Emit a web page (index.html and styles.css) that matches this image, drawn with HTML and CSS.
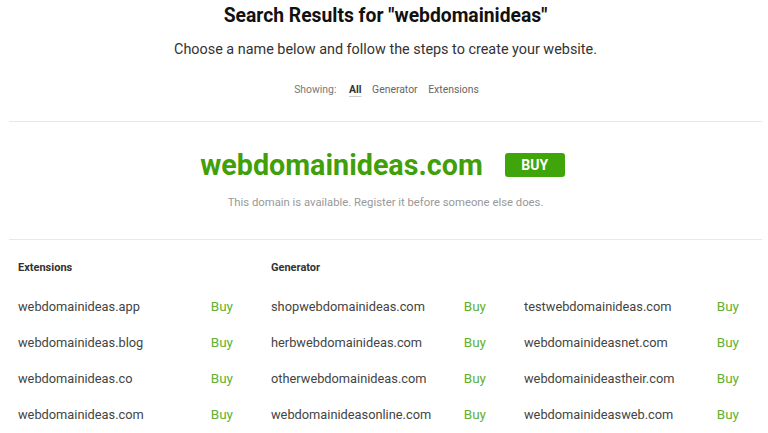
FILE: index.html
```html
<!DOCTYPE html>
<html lang="en">
<head>
  <meta charset="UTF-8" />
  <title>Search Results</title>
  <link rel="stylesheet" href="styles.css">
</head>
<body>
  <div class="intro">
    <h1>Search Results for "webdomainideas"</h1>
    <p class="lead">Choose a name below and follow the steps to create your website.</p>
    <div class="filters">
      <span class="label">Showing:</span>
      <a class="active">All</a>
      <a>Generator</a>
      <a>Extensions</a>
    </div>
  </div>

  <div class="featured">
    <div class="featured-row">
      <span class="featured-name">webdomainideas.com</span>
      <button class="buy-btn">BUY</button>
    </div>
    <p class="note">This domain is available. Register it before someone else does.</p>
  </div>

  <div class="results">
    <div class="col">
      <h4>Extensions</h4>
      <div class="row"><span>webdomainideas.app</span><a>Buy</a></div>
      <div class="row"><span>webdomainideas.blog</span><a>Buy</a></div>
      <div class="row"><span>webdomainideas.co</span><a>Buy</a></div>
      <div class="row"><span>webdomainideas.com</span><a>Buy</a></div>
    </div>
    <div class="col">
      <h4>Generator</h4>
      <div class="row"><span>shopwebdomainideas.com</span><a>Buy</a></div>
      <div class="row"><span>herbwebdomainideas.com</span><a>Buy</a></div>
      <div class="row"><span>otherwebdomainideas.com</span><a>Buy</a></div>
      <div class="row"><span>webdomainideasonline.com</span><a>Buy</a></div>
    </div>
    <div class="col">
      <h4>&nbsp;</h4>
      <div class="row"><span>testwebdomainideas.com</span><a>Buy</a></div>
      <div class="row"><span>webdomainideasnet.com</span><a>Buy</a></div>
      <div class="row"><span>webdomainideastheir.com</span><a>Buy</a></div>
      <div class="row"><span>webdomainideasweb.com</span><a>Buy</a></div>
    </div>
  </div>
</body>
</html>
```

FILE: styles.css
```css
body {
  margin: 0;
  font-family: Roboto, "Liberation Sans", sans-serif;
  background-color: #fff;
  color: #333;
  overflow: hidden;
}

.intro {
  margin: 0 6px 0 9px;
  padding-top: 4px;
  text-align: center;
  border-bottom: 1px solid #e8e8e8;
}

h1 {
  margin: 0;
  font-size: 19.3px;
  line-height: 24px;
  font-weight: 700;
  color: #111;
}

.lead {
  margin: 12px 0 0;
  font-size: 14.4px;
  line-height: 20px;
  color: #333;
}

.filters {
  margin: 22px 0 23px;
  font-size: 10.4px;
  line-height: 16px;
  color: #777;
  padding-left: 6px;
}

.filters .label {
  margin-right: 6px;
}

.filters a {
  margin: 0 4px;
  color: #666;
  cursor: pointer;
}

.filters a.active {
  font-weight: 700;
  color: #333;
  text-decoration: underline;
  text-decoration-color: #ccc;
  text-underline-offset: 3px;
}

/* dominio principal */
.featured {
  margin: 0 6px 0 9px;
  padding: 25px 0 28px;
  text-align: center;
  border-bottom: 1px solid #e8e8e8;
}

.featured-row {
  display: flex;
  justify-content: center;
  align-items: center;
  gap: 22px;
  height: 36px;
  padding-right: 6px;
}

.featured-name {
  font-size: 28.7px;
  font-weight: 700;
  color: #41a00a;
  line-height: 36px;
}

.buy-btn {
  background-color: #3fa50a;
  color: #fff;
  border: none;
  border-radius: 3px;
  width: 60px;
  height: 24px;
  font-family: inherit;
  font-size: 14px;
  font-weight: 700;
  cursor: pointer;
}

.note {
  margin: 12px 0 0;
  font-size: 11.3px;
  line-height: 16px;
  color: #999;
}

/* listas */
.results {
  display: flex;
  padding: 20px 0 0 18px;
}

.col {
  width: 253px;
  flex-shrink: 0;
}

.col h4 {
  margin: 0 0 12px;
  font-size: 11px;
  line-height: 16px;
  font-weight: 700;
  color: #333;
}

.row {
  display: flex;
  width: 215px;
  justify-content: space-between;
  align-items: center;
  height: 36px;
  font-size: 12.8px;
  color: #444;
}

.row a {
  color: #62b12e;
  font-size: 13.5px;
  cursor: pointer;
}
```
